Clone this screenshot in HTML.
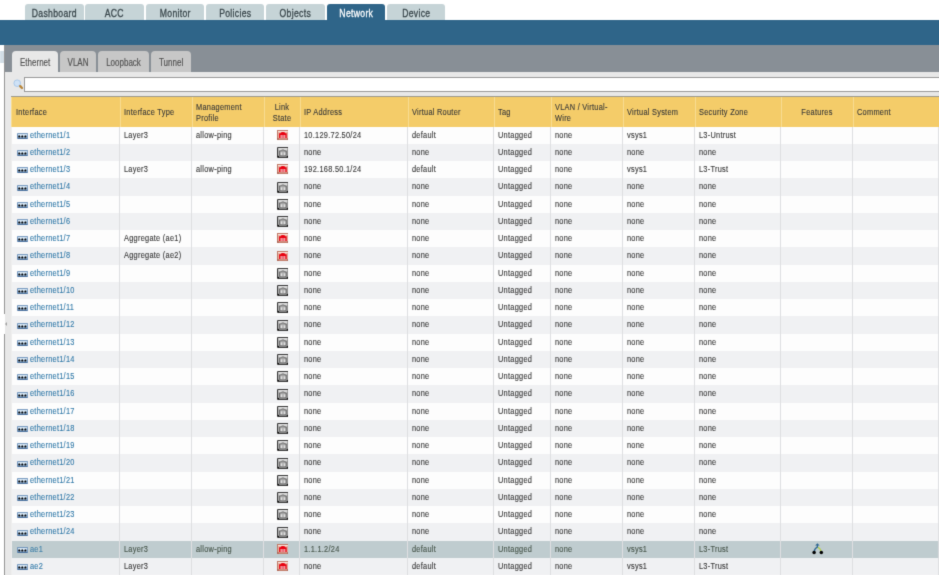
<!DOCTYPE html><html><head><meta charset='utf-8'><style>
*{margin:0;padding:0;box-sizing:border-box}
html,body{width:939px;height:575px;overflow:hidden;background:#fff;font-family:"Liberation Sans", sans-serif;position:relative}
#root{position:absolute;left:-6px;top:-6px;width:951px;height:587px;will-change:transform;background:#fff;filter:url(#soft)}
#c{position:absolute;left:6px;top:6px;width:939px;height:575px}
.a{position:absolute}
.tt{position:absolute;top:4px;height:16px;background:#c6d4d7;border-radius:3px 3px 0 0;}
.tt span{position:absolute;left:0;right:0;top:2.6px;text-align:center;font-size:10.8px;line-height:13px;letter-spacing:0.4px;color:#39464b;white-space:nowrap;transform:scaleX(0.8);-webkit-text-stroke:0.3px #39464b}
.tt.sel{background:#2f6589}
.tt.sel span{color:#fff;-webkit-text-stroke:0.3px #fff}
.st{position:absolute;top:51.2px;height:20.8px;background:#c7c7c7;border-radius:4px 4px 0 0}
.st span{position:absolute;left:0;right:0;top:5.8px;text-align:center;font-size:10px;line-height:12px;color:#505050;white-space:nowrap;transform:scaleX(0.8);-webkit-text-stroke:0.15px #505050}
.st.sel{background:#e8e8e8}
.t{position:absolute;font-size:8.3px;line-height:10.6px;color:#383838;-webkit-text-stroke:0.12px currentColor;white-space:nowrap;letter-spacing:0.3px;transform:scaleX(0.89);transform-origin:0 0}
.tc{transform-origin:50% 0}
.lk{color:#3179a8}
.sl{color:#46554a}
.sl.lk{color:#4080a8}
.vl{position:absolute;width:1px}
</style></head><body><svg width='0' height='0' style='position:absolute'><filter id='soft' x='0' y='0' width='1' height='1' color-interpolation-filters='sRGB'><feConvolveMatrix order='3' kernelMatrix='0.0144 0.0912 0.0144 0.0912 0.5776 0.0912 0.0144 0.0912 0.0144' divisor='1' edgeMode='duplicate' preserveAlpha='true'/></filter></svg><div id='root'><div id='c'>
<div class='tt' style='left:25.00px;width:58.6px'><span>Dashboard</span></div>
<div class='tt' style='left:85.30px;width:58.6px'><span>ACC</span></div>
<div class='tt' style='left:145.60px;width:58.6px'><span>Monitor</span></div>
<div class='tt' style='left:205.90px;width:58.6px'><span>Policies</span></div>
<div class='tt' style='left:266.20px;width:58.6px'><span>Objects</span></div>
<div class='tt sel' style='left:326.50px;width:58.6px'><span>Network</span></div>
<div class='tt' style='left:386.80px;width:58.6px'><span>Device</span></div>
<div class='a' style='left:-6px;top:20px;width:951px;height:24.5px;background:#2f6589'></div>
<div class='a' style='left:-6px;top:44.5px;width:10px;height:540px;background:#fff'></div>
<div class='a' style='left:0;top:50.7px;width:3.8px;height:12.5px;background:#d3dee6'></div>
<div class='a' style='left:4.6px;top:44.5px;width:941px;height:27.5px;background:#888f96'></div>
<div class='a' style='left:4.6px;top:72px;width:941px;height:509px;background:#e8e8e8'></div>
<div class='a' style='left:3.9px;top:44.5px;width:1.2px;height:269.5px;background:#959595'></div>
<div class='a' style='left:3.9px;top:334px;width:1.2px;height:247px;background:#959595'></div>
<div class='a' style='left:4.8px;top:322.4px;width:0;height:0;border-top:2px solid transparent;border-bottom:2px solid transparent;border-right:2.2px solid #a0a0a0'></div>
<div class='st sel' style='left:11.7px;width:46.3px'><span>Ethernet</span></div>
<div class='st' style='left:60.0px;width:36.0px'><span>VLAN</span></div>
<div class='st' style='left:98.0px;width:51.0px'><span>Loopback</span></div>
<div class='st' style='left:150.8px;width:40.2px'><span>Tunnel</span></div>
<svg class='a' style='left:12.5px;top:79px' width='11' height='11' viewBox='0 0 11 11'>
<circle cx='4.2' cy='4.2' r='3.3' fill='#cfe2f6' stroke='#a9c8ea' stroke-width='1'/>
<line x1='7.2' y1='7.2' x2='9.0' y2='9.0' stroke='#b8863a' stroke-width='2.4' stroke-linecap='round'/>
</svg>
<div class='a' style='left:24px;top:77px;width:920px;height:15px;background:#fff;border:1px solid #999;border-right:0'></div>
<div class='a' style='left:11px;top:96.0px;width:935px;height:30.70px;background:#f4cc69;border-top:1px solid #9c9a8e'></div>
<div class='a' style='left:11px;top:97.0px;width:1px;height:29.70px;background:#f8dc92'></div>
<div class='t' style='left:16.0px;top:106.70px'>Interface</div>
<div class='vl' style='left:120.0px;top:97.0px;height:29.70px;background:#f8dc92'></div>
<div class='t' style='left:124.0px;top:106.70px'>Interface Type</div>
<div class='vl' style='left:192.0px;top:97.0px;height:29.70px;background:#f8dc92'></div>
<div class='t' style='left:196.0px;top:102.00px'>Management<br>Profile</div>
<div class='vl' style='left:264.0px;top:97.0px;height:29.70px;background:#f8dc92'></div>
<div class='t tc' style='left:264.0px;width:36.0px;text-align:center;top:102.00px'>Link<br>State</div>
<div class='vl' style='left:300.0px;top:97.0px;height:29.70px;background:#f8dc92'></div>
<div class='t' style='left:304.0px;top:106.70px'>IP Address</div>
<div class='vl' style='left:408.0px;top:97.0px;height:29.70px;background:#f8dc92'></div>
<div class='t' style='left:412.0px;top:106.70px'>Virtual Router</div>
<div class='vl' style='left:494.0px;top:97.0px;height:29.70px;background:#f8dc92'></div>
<div class='t' style='left:498.0px;top:106.70px'>Tag</div>
<div class='vl' style='left:551.0px;top:97.0px;height:29.70px;background:#f8dc92'></div>
<div class='t' style='left:555.0px;top:102.00px'>VLAN / Virtual-<br>Wire</div>
<div class='vl' style='left:623.0px;top:97.0px;height:29.70px;background:#f8dc92'></div>
<div class='t' style='left:627.0px;top:106.70px'>Virtual System</div>
<div class='vl' style='left:695.0px;top:97.0px;height:29.70px;background:#f8dc92'></div>
<div class='t' style='left:699.0px;top:106.70px'>Security Zone</div>
<div class='vl' style='left:781.0px;top:97.0px;height:29.70px;background:#f8dc92'></div>
<div class='t tc' style='left:781.0px;width:72.0px;text-align:center;top:106.70px'>Features</div>
<div class='vl' style='left:853.0px;top:97.0px;height:29.70px;background:#f8dc92'></div>
<div class='t' style='left:857.0px;top:106.70px'>Comment</div>
<div class='a' style='left:12px;top:126.70px;width:935px;height:17.26px;background:#fdfdfd'></div>
<svg class='a' style='left:16.7px;top:132.90px' width='11.2' height='6' viewBox='0 0 11.2 6'><defs><linearGradient id='ig0' x1='0' y1='0' x2='0' y2='1'><stop offset='0' stop-color='#e2f0fa'/><stop offset='1' stop-color='#8fb4da'/></linearGradient></defs><rect x='0.4' y='0.4' width='10.4' height='5.2' rx='0.6' fill='url(#ig0)' stroke='#4f7aab' stroke-width='0.8'/><rect x='0.8' y='5.0' width='9.6' height='0.6' fill='#3a6292'/><rect x='1.3' y='2.5' width='2.0' height='2.0' rx='0.5' fill='#000'/><rect x='4.3' y='2.5' width='2.0' height='2.0' rx='0.5' fill='#000'/><rect x='7.4' y='2.5' width='2.0' height='2.0' rx='0.5' fill='#000'/><rect x='3.4' y='1.6' width='0.8' height='1.5' fill='#fff'/><rect x='6.5' y='1.6' width='0.8' height='1.5' fill='#fff'/></svg>
<div class='t lk' style='left:29.8px;top:129.60px'>ethernet1/1</div>
<div class='t' style='left:124.0px;top:129.60px'>Layer3</div>
<div class='t' style='left:196.0px;top:129.60px'>allow-ping</div>
<div class='t' style='left:304.0px;top:129.60px'>10.129.72.50/24</div>
<div class='t' style='left:412.0px;top:129.60px'>default</div>
<div class='t' style='left:498.0px;top:129.60px'>Untagged</div>
<div class='t' style='left:555.0px;top:129.60px'>none</div>
<div class='t' style='left:627.0px;top:129.60px'>vsys1</div>
<div class='t' style='left:699.0px;top:129.60px'>L3-Untrust</div>
<svg class='a' style='left:276.6px;top:129.80px' width='11.8' height='10' viewBox='0 0 11.8 10'><rect x='0.5' y='0.5' width='10.8' height='9' fill='#eab0a0' stroke='#c07a68'/><rect x='1' y='1.0' width='9.8' height='1.1' fill='#f9e4dc'/><path d='M2.1 8.2 V3.3 H3.5 Q3.9 2.1 5.9 2.1 Q7.9 2.1 8.3 3.3 H9.7 V8.2 Z' fill='#e8000f'/><rect x='3.4' y='5.0' width='5.0' height='3.2' fill='#f49aa0'/><rect x='4.9' y='5.0' width='0.55' height='3.2' fill='#e04a56'/><rect x='6.4' y='5.0' width='0.55' height='3.2' fill='#e04a56'/><rect x='1' y='8.2' width='9.8' height='1' fill='#cf8f7f'/><rect x='0.4' y='8.4' width='1.1' height='1.1' fill='#8f4a3c'/><rect x='10.3' y='8.4' width='1.1' height='1.1' fill='#8f4a3c'/></svg>
<div class='a' style='left:12px;top:143.95px;width:935px;height:17.26px;background:#f0f1f3'></div>
<svg class='a' style='left:16.7px;top:150.15px' width='11.2' height='6' viewBox='0 0 11.2 6'><defs><linearGradient id='ig1' x1='0' y1='0' x2='0' y2='1'><stop offset='0' stop-color='#e2f0fa'/><stop offset='1' stop-color='#8fb4da'/></linearGradient></defs><rect x='0.4' y='0.4' width='10.4' height='5.2' rx='0.6' fill='url(#ig1)' stroke='#4f7aab' stroke-width='0.8'/><rect x='0.8' y='5.0' width='9.6' height='0.6' fill='#3a6292'/><rect x='1.3' y='2.5' width='2.0' height='2.0' rx='0.5' fill='#000'/><rect x='4.3' y='2.5' width='2.0' height='2.0' rx='0.5' fill='#000'/><rect x='7.4' y='2.5' width='2.0' height='2.0' rx='0.5' fill='#000'/><rect x='3.4' y='1.6' width='0.8' height='1.5' fill='#fff'/><rect x='6.5' y='1.6' width='0.8' height='1.5' fill='#fff'/></svg>
<div class='t lk' style='left:29.8px;top:146.85px'>ethernet1/2</div>
<div class='t' style='left:304.0px;top:146.85px'>none</div>
<div class='t' style='left:412.0px;top:146.85px'>none</div>
<div class='t' style='left:498.0px;top:146.85px'>Untagged</div>
<div class='t' style='left:555.0px;top:146.85px'>none</div>
<div class='t' style='left:627.0px;top:146.85px'>none</div>
<div class='t' style='left:699.0px;top:146.85px'>none</div>
<svg class='a' style='left:276.6px;top:147.05px' width='11.8' height='11' viewBox='0 0 11.8 11'><rect x='0.6' y='0.6' width='10.6' height='9.8' rx='0.5' fill='#cfcfcf' stroke='#3c3c3c' stroke-width='1.2'/><rect x='1.3' y='1.3' width='9.2' height='1' fill='#f6f6f6'/><path d='M2.5 8.6 V3.9 H3.8 Q4.2 2.9 5.9 2.9 Q7.6 2.9 8 3.9 H9.3 V8.6 Z' fill='#a2a2a2' stroke='#5a5a5a' stroke-width='0.8'/><rect x='3.7' y='5.3' width='4.6' height='3' fill='#e2e2e2'/><rect x='5.2' y='5.3' width='0.5' height='3' fill='#8c8c8c'/><rect x='6.5' y='5.3' width='0.5' height='3' fill='#8c8c8c'/><rect x='1.3' y='8.9' width='9.2' height='0.9' fill='#808080'/><circle cx='1.3' cy='9.6' r='0.8' fill='#111'/><circle cx='10.5' cy='9.6' r='0.8' fill='#111'/></svg>
<div class='a' style='left:12px;top:161.20px;width:935px;height:17.26px;background:#fdfdfd'></div>
<svg class='a' style='left:16.7px;top:167.40px' width='11.2' height='6' viewBox='0 0 11.2 6'><defs><linearGradient id='ig2' x1='0' y1='0' x2='0' y2='1'><stop offset='0' stop-color='#e2f0fa'/><stop offset='1' stop-color='#8fb4da'/></linearGradient></defs><rect x='0.4' y='0.4' width='10.4' height='5.2' rx='0.6' fill='url(#ig2)' stroke='#4f7aab' stroke-width='0.8'/><rect x='0.8' y='5.0' width='9.6' height='0.6' fill='#3a6292'/><rect x='1.3' y='2.5' width='2.0' height='2.0' rx='0.5' fill='#000'/><rect x='4.3' y='2.5' width='2.0' height='2.0' rx='0.5' fill='#000'/><rect x='7.4' y='2.5' width='2.0' height='2.0' rx='0.5' fill='#000'/><rect x='3.4' y='1.6' width='0.8' height='1.5' fill='#fff'/><rect x='6.5' y='1.6' width='0.8' height='1.5' fill='#fff'/></svg>
<div class='t lk' style='left:29.8px;top:164.10px'>ethernet1/3</div>
<div class='t' style='left:124.0px;top:164.10px'>Layer3</div>
<div class='t' style='left:196.0px;top:164.10px'>allow-ping</div>
<div class='t' style='left:304.0px;top:164.10px'>192.168.50.1/24</div>
<div class='t' style='left:412.0px;top:164.10px'>default</div>
<div class='t' style='left:498.0px;top:164.10px'>Untagged</div>
<div class='t' style='left:555.0px;top:164.10px'>none</div>
<div class='t' style='left:627.0px;top:164.10px'>vsys1</div>
<div class='t' style='left:699.0px;top:164.10px'>L3-Trust</div>
<svg class='a' style='left:276.6px;top:164.30px' width='11.8' height='10' viewBox='0 0 11.8 10'><rect x='0.5' y='0.5' width='10.8' height='9' fill='#eab0a0' stroke='#c07a68'/><rect x='1' y='1.0' width='9.8' height='1.1' fill='#f9e4dc'/><path d='M2.1 8.2 V3.3 H3.5 Q3.9 2.1 5.9 2.1 Q7.9 2.1 8.3 3.3 H9.7 V8.2 Z' fill='#e8000f'/><rect x='3.4' y='5.0' width='5.0' height='3.2' fill='#f49aa0'/><rect x='4.9' y='5.0' width='0.55' height='3.2' fill='#e04a56'/><rect x='6.4' y='5.0' width='0.55' height='3.2' fill='#e04a56'/><rect x='1' y='8.2' width='9.8' height='1' fill='#cf8f7f'/><rect x='0.4' y='8.4' width='1.1' height='1.1' fill='#8f4a3c'/><rect x='10.3' y='8.4' width='1.1' height='1.1' fill='#8f4a3c'/></svg>
<div class='a' style='left:12px;top:178.45px;width:935px;height:17.26px;background:#f0f1f3'></div>
<svg class='a' style='left:16.7px;top:184.65px' width='11.2' height='6' viewBox='0 0 11.2 6'><defs><linearGradient id='ig3' x1='0' y1='0' x2='0' y2='1'><stop offset='0' stop-color='#e2f0fa'/><stop offset='1' stop-color='#8fb4da'/></linearGradient></defs><rect x='0.4' y='0.4' width='10.4' height='5.2' rx='0.6' fill='url(#ig3)' stroke='#4f7aab' stroke-width='0.8'/><rect x='0.8' y='5.0' width='9.6' height='0.6' fill='#3a6292'/><rect x='1.3' y='2.5' width='2.0' height='2.0' rx='0.5' fill='#000'/><rect x='4.3' y='2.5' width='2.0' height='2.0' rx='0.5' fill='#000'/><rect x='7.4' y='2.5' width='2.0' height='2.0' rx='0.5' fill='#000'/><rect x='3.4' y='1.6' width='0.8' height='1.5' fill='#fff'/><rect x='6.5' y='1.6' width='0.8' height='1.5' fill='#fff'/></svg>
<div class='t lk' style='left:29.8px;top:181.35px'>ethernet1/4</div>
<div class='t' style='left:304.0px;top:181.35px'>none</div>
<div class='t' style='left:412.0px;top:181.35px'>none</div>
<div class='t' style='left:498.0px;top:181.35px'>Untagged</div>
<div class='t' style='left:555.0px;top:181.35px'>none</div>
<div class='t' style='left:627.0px;top:181.35px'>none</div>
<div class='t' style='left:699.0px;top:181.35px'>none</div>
<svg class='a' style='left:276.6px;top:181.55px' width='11.8' height='11' viewBox='0 0 11.8 11'><rect x='0.6' y='0.6' width='10.6' height='9.8' rx='0.5' fill='#cfcfcf' stroke='#3c3c3c' stroke-width='1.2'/><rect x='1.3' y='1.3' width='9.2' height='1' fill='#f6f6f6'/><path d='M2.5 8.6 V3.9 H3.8 Q4.2 2.9 5.9 2.9 Q7.6 2.9 8 3.9 H9.3 V8.6 Z' fill='#a2a2a2' stroke='#5a5a5a' stroke-width='0.8'/><rect x='3.7' y='5.3' width='4.6' height='3' fill='#e2e2e2'/><rect x='5.2' y='5.3' width='0.5' height='3' fill='#8c8c8c'/><rect x='6.5' y='5.3' width='0.5' height='3' fill='#8c8c8c'/><rect x='1.3' y='8.9' width='9.2' height='0.9' fill='#808080'/><circle cx='1.3' cy='9.6' r='0.8' fill='#111'/><circle cx='10.5' cy='9.6' r='0.8' fill='#111'/></svg>
<div class='a' style='left:12px;top:195.70px;width:935px;height:17.26px;background:#fdfdfd'></div>
<svg class='a' style='left:16.7px;top:201.90px' width='11.2' height='6' viewBox='0 0 11.2 6'><defs><linearGradient id='ig4' x1='0' y1='0' x2='0' y2='1'><stop offset='0' stop-color='#e2f0fa'/><stop offset='1' stop-color='#8fb4da'/></linearGradient></defs><rect x='0.4' y='0.4' width='10.4' height='5.2' rx='0.6' fill='url(#ig4)' stroke='#4f7aab' stroke-width='0.8'/><rect x='0.8' y='5.0' width='9.6' height='0.6' fill='#3a6292'/><rect x='1.3' y='2.5' width='2.0' height='2.0' rx='0.5' fill='#000'/><rect x='4.3' y='2.5' width='2.0' height='2.0' rx='0.5' fill='#000'/><rect x='7.4' y='2.5' width='2.0' height='2.0' rx='0.5' fill='#000'/><rect x='3.4' y='1.6' width='0.8' height='1.5' fill='#fff'/><rect x='6.5' y='1.6' width='0.8' height='1.5' fill='#fff'/></svg>
<div class='t lk' style='left:29.8px;top:198.60px'>ethernet1/5</div>
<div class='t' style='left:304.0px;top:198.60px'>none</div>
<div class='t' style='left:412.0px;top:198.60px'>none</div>
<div class='t' style='left:498.0px;top:198.60px'>Untagged</div>
<div class='t' style='left:555.0px;top:198.60px'>none</div>
<div class='t' style='left:627.0px;top:198.60px'>none</div>
<div class='t' style='left:699.0px;top:198.60px'>none</div>
<svg class='a' style='left:276.6px;top:198.80px' width='11.8' height='11' viewBox='0 0 11.8 11'><rect x='0.6' y='0.6' width='10.6' height='9.8' rx='0.5' fill='#cfcfcf' stroke='#3c3c3c' stroke-width='1.2'/><rect x='1.3' y='1.3' width='9.2' height='1' fill='#f6f6f6'/><path d='M2.5 8.6 V3.9 H3.8 Q4.2 2.9 5.9 2.9 Q7.6 2.9 8 3.9 H9.3 V8.6 Z' fill='#a2a2a2' stroke='#5a5a5a' stroke-width='0.8'/><rect x='3.7' y='5.3' width='4.6' height='3' fill='#e2e2e2'/><rect x='5.2' y='5.3' width='0.5' height='3' fill='#8c8c8c'/><rect x='6.5' y='5.3' width='0.5' height='3' fill='#8c8c8c'/><rect x='1.3' y='8.9' width='9.2' height='0.9' fill='#808080'/><circle cx='1.3' cy='9.6' r='0.8' fill='#111'/><circle cx='10.5' cy='9.6' r='0.8' fill='#111'/></svg>
<div class='a' style='left:12px;top:212.95px;width:935px;height:17.26px;background:#f0f1f3'></div>
<svg class='a' style='left:16.7px;top:219.15px' width='11.2' height='6' viewBox='0 0 11.2 6'><defs><linearGradient id='ig5' x1='0' y1='0' x2='0' y2='1'><stop offset='0' stop-color='#e2f0fa'/><stop offset='1' stop-color='#8fb4da'/></linearGradient></defs><rect x='0.4' y='0.4' width='10.4' height='5.2' rx='0.6' fill='url(#ig5)' stroke='#4f7aab' stroke-width='0.8'/><rect x='0.8' y='5.0' width='9.6' height='0.6' fill='#3a6292'/><rect x='1.3' y='2.5' width='2.0' height='2.0' rx='0.5' fill='#000'/><rect x='4.3' y='2.5' width='2.0' height='2.0' rx='0.5' fill='#000'/><rect x='7.4' y='2.5' width='2.0' height='2.0' rx='0.5' fill='#000'/><rect x='3.4' y='1.6' width='0.8' height='1.5' fill='#fff'/><rect x='6.5' y='1.6' width='0.8' height='1.5' fill='#fff'/></svg>
<div class='t lk' style='left:29.8px;top:215.85px'>ethernet1/6</div>
<div class='t' style='left:304.0px;top:215.85px'>none</div>
<div class='t' style='left:412.0px;top:215.85px'>none</div>
<div class='t' style='left:498.0px;top:215.85px'>Untagged</div>
<div class='t' style='left:555.0px;top:215.85px'>none</div>
<div class='t' style='left:627.0px;top:215.85px'>none</div>
<div class='t' style='left:699.0px;top:215.85px'>none</div>
<svg class='a' style='left:276.6px;top:216.05px' width='11.8' height='11' viewBox='0 0 11.8 11'><rect x='0.6' y='0.6' width='10.6' height='9.8' rx='0.5' fill='#cfcfcf' stroke='#3c3c3c' stroke-width='1.2'/><rect x='1.3' y='1.3' width='9.2' height='1' fill='#f6f6f6'/><path d='M2.5 8.6 V3.9 H3.8 Q4.2 2.9 5.9 2.9 Q7.6 2.9 8 3.9 H9.3 V8.6 Z' fill='#a2a2a2' stroke='#5a5a5a' stroke-width='0.8'/><rect x='3.7' y='5.3' width='4.6' height='3' fill='#e2e2e2'/><rect x='5.2' y='5.3' width='0.5' height='3' fill='#8c8c8c'/><rect x='6.5' y='5.3' width='0.5' height='3' fill='#8c8c8c'/><rect x='1.3' y='8.9' width='9.2' height='0.9' fill='#808080'/><circle cx='1.3' cy='9.6' r='0.8' fill='#111'/><circle cx='10.5' cy='9.6' r='0.8' fill='#111'/></svg>
<div class='a' style='left:12px;top:230.20px;width:935px;height:17.26px;background:#fdfdfd'></div>
<svg class='a' style='left:16.7px;top:236.40px' width='11.2' height='6' viewBox='0 0 11.2 6'><defs><linearGradient id='ig6' x1='0' y1='0' x2='0' y2='1'><stop offset='0' stop-color='#e2f0fa'/><stop offset='1' stop-color='#8fb4da'/></linearGradient></defs><rect x='0.4' y='0.4' width='10.4' height='5.2' rx='0.6' fill='url(#ig6)' stroke='#4f7aab' stroke-width='0.8'/><rect x='0.8' y='5.0' width='9.6' height='0.6' fill='#3a6292'/><rect x='1.3' y='2.5' width='2.0' height='2.0' rx='0.5' fill='#000'/><rect x='4.3' y='2.5' width='2.0' height='2.0' rx='0.5' fill='#000'/><rect x='7.4' y='2.5' width='2.0' height='2.0' rx='0.5' fill='#000'/><rect x='3.4' y='1.6' width='0.8' height='1.5' fill='#fff'/><rect x='6.5' y='1.6' width='0.8' height='1.5' fill='#fff'/></svg>
<div class='t lk' style='left:29.8px;top:233.10px'>ethernet1/7</div>
<div class='t' style='left:124.0px;top:233.10px'>Aggregate (ae1)</div>
<div class='t' style='left:304.0px;top:233.10px'>none</div>
<div class='t' style='left:412.0px;top:233.10px'>none</div>
<div class='t' style='left:498.0px;top:233.10px'>Untagged</div>
<div class='t' style='left:555.0px;top:233.10px'>none</div>
<div class='t' style='left:627.0px;top:233.10px'>none</div>
<div class='t' style='left:699.0px;top:233.10px'>none</div>
<svg class='a' style='left:276.6px;top:233.30px' width='11.8' height='10' viewBox='0 0 11.8 10'><rect x='0.5' y='0.5' width='10.8' height='9' fill='#eab0a0' stroke='#c07a68'/><rect x='1' y='1.0' width='9.8' height='1.1' fill='#f9e4dc'/><path d='M2.1 8.2 V3.3 H3.5 Q3.9 2.1 5.9 2.1 Q7.9 2.1 8.3 3.3 H9.7 V8.2 Z' fill='#e8000f'/><rect x='3.4' y='5.0' width='5.0' height='3.2' fill='#f49aa0'/><rect x='4.9' y='5.0' width='0.55' height='3.2' fill='#e04a56'/><rect x='6.4' y='5.0' width='0.55' height='3.2' fill='#e04a56'/><rect x='1' y='8.2' width='9.8' height='1' fill='#cf8f7f'/><rect x='0.4' y='8.4' width='1.1' height='1.1' fill='#8f4a3c'/><rect x='10.3' y='8.4' width='1.1' height='1.1' fill='#8f4a3c'/></svg>
<div class='a' style='left:12px;top:247.45px;width:935px;height:17.26px;background:#f0f1f3'></div>
<svg class='a' style='left:16.7px;top:253.65px' width='11.2' height='6' viewBox='0 0 11.2 6'><defs><linearGradient id='ig7' x1='0' y1='0' x2='0' y2='1'><stop offset='0' stop-color='#e2f0fa'/><stop offset='1' stop-color='#8fb4da'/></linearGradient></defs><rect x='0.4' y='0.4' width='10.4' height='5.2' rx='0.6' fill='url(#ig7)' stroke='#4f7aab' stroke-width='0.8'/><rect x='0.8' y='5.0' width='9.6' height='0.6' fill='#3a6292'/><rect x='1.3' y='2.5' width='2.0' height='2.0' rx='0.5' fill='#000'/><rect x='4.3' y='2.5' width='2.0' height='2.0' rx='0.5' fill='#000'/><rect x='7.4' y='2.5' width='2.0' height='2.0' rx='0.5' fill='#000'/><rect x='3.4' y='1.6' width='0.8' height='1.5' fill='#fff'/><rect x='6.5' y='1.6' width='0.8' height='1.5' fill='#fff'/></svg>
<div class='t lk' style='left:29.8px;top:250.35px'>ethernet1/8</div>
<div class='t' style='left:124.0px;top:250.35px'>Aggregate (ae2)</div>
<div class='t' style='left:304.0px;top:250.35px'>none</div>
<div class='t' style='left:412.0px;top:250.35px'>none</div>
<div class='t' style='left:498.0px;top:250.35px'>Untagged</div>
<div class='t' style='left:555.0px;top:250.35px'>none</div>
<div class='t' style='left:627.0px;top:250.35px'>none</div>
<div class='t' style='left:699.0px;top:250.35px'>none</div>
<svg class='a' style='left:276.6px;top:250.55px' width='11.8' height='10' viewBox='0 0 11.8 10'><rect x='0.5' y='0.5' width='10.8' height='9' fill='#eab0a0' stroke='#c07a68'/><rect x='1' y='1.0' width='9.8' height='1.1' fill='#f9e4dc'/><path d='M2.1 8.2 V3.3 H3.5 Q3.9 2.1 5.9 2.1 Q7.9 2.1 8.3 3.3 H9.7 V8.2 Z' fill='#e8000f'/><rect x='3.4' y='5.0' width='5.0' height='3.2' fill='#f49aa0'/><rect x='4.9' y='5.0' width='0.55' height='3.2' fill='#e04a56'/><rect x='6.4' y='5.0' width='0.55' height='3.2' fill='#e04a56'/><rect x='1' y='8.2' width='9.8' height='1' fill='#cf8f7f'/><rect x='0.4' y='8.4' width='1.1' height='1.1' fill='#8f4a3c'/><rect x='10.3' y='8.4' width='1.1' height='1.1' fill='#8f4a3c'/></svg>
<div class='a' style='left:12px;top:264.70px;width:935px;height:17.26px;background:#fdfdfd'></div>
<svg class='a' style='left:16.7px;top:270.90px' width='11.2' height='6' viewBox='0 0 11.2 6'><defs><linearGradient id='ig8' x1='0' y1='0' x2='0' y2='1'><stop offset='0' stop-color='#e2f0fa'/><stop offset='1' stop-color='#8fb4da'/></linearGradient></defs><rect x='0.4' y='0.4' width='10.4' height='5.2' rx='0.6' fill='url(#ig8)' stroke='#4f7aab' stroke-width='0.8'/><rect x='0.8' y='5.0' width='9.6' height='0.6' fill='#3a6292'/><rect x='1.3' y='2.5' width='2.0' height='2.0' rx='0.5' fill='#000'/><rect x='4.3' y='2.5' width='2.0' height='2.0' rx='0.5' fill='#000'/><rect x='7.4' y='2.5' width='2.0' height='2.0' rx='0.5' fill='#000'/><rect x='3.4' y='1.6' width='0.8' height='1.5' fill='#fff'/><rect x='6.5' y='1.6' width='0.8' height='1.5' fill='#fff'/></svg>
<div class='t lk' style='left:29.8px;top:267.60px'>ethernet1/9</div>
<div class='t' style='left:304.0px;top:267.60px'>none</div>
<div class='t' style='left:412.0px;top:267.60px'>none</div>
<div class='t' style='left:498.0px;top:267.60px'>Untagged</div>
<div class='t' style='left:555.0px;top:267.60px'>none</div>
<div class='t' style='left:627.0px;top:267.60px'>none</div>
<div class='t' style='left:699.0px;top:267.60px'>none</div>
<svg class='a' style='left:276.6px;top:267.80px' width='11.8' height='11' viewBox='0 0 11.8 11'><rect x='0.6' y='0.6' width='10.6' height='9.8' rx='0.5' fill='#cfcfcf' stroke='#3c3c3c' stroke-width='1.2'/><rect x='1.3' y='1.3' width='9.2' height='1' fill='#f6f6f6'/><path d='M2.5 8.6 V3.9 H3.8 Q4.2 2.9 5.9 2.9 Q7.6 2.9 8 3.9 H9.3 V8.6 Z' fill='#a2a2a2' stroke='#5a5a5a' stroke-width='0.8'/><rect x='3.7' y='5.3' width='4.6' height='3' fill='#e2e2e2'/><rect x='5.2' y='5.3' width='0.5' height='3' fill='#8c8c8c'/><rect x='6.5' y='5.3' width='0.5' height='3' fill='#8c8c8c'/><rect x='1.3' y='8.9' width='9.2' height='0.9' fill='#808080'/><circle cx='1.3' cy='9.6' r='0.8' fill='#111'/><circle cx='10.5' cy='9.6' r='0.8' fill='#111'/></svg>
<div class='a' style='left:12px;top:281.95px;width:935px;height:17.26px;background:#f0f1f3'></div>
<svg class='a' style='left:16.7px;top:288.15px' width='11.2' height='6' viewBox='0 0 11.2 6'><defs><linearGradient id='ig9' x1='0' y1='0' x2='0' y2='1'><stop offset='0' stop-color='#e2f0fa'/><stop offset='1' stop-color='#8fb4da'/></linearGradient></defs><rect x='0.4' y='0.4' width='10.4' height='5.2' rx='0.6' fill='url(#ig9)' stroke='#4f7aab' stroke-width='0.8'/><rect x='0.8' y='5.0' width='9.6' height='0.6' fill='#3a6292'/><rect x='1.3' y='2.5' width='2.0' height='2.0' rx='0.5' fill='#000'/><rect x='4.3' y='2.5' width='2.0' height='2.0' rx='0.5' fill='#000'/><rect x='7.4' y='2.5' width='2.0' height='2.0' rx='0.5' fill='#000'/><rect x='3.4' y='1.6' width='0.8' height='1.5' fill='#fff'/><rect x='6.5' y='1.6' width='0.8' height='1.5' fill='#fff'/></svg>
<div class='t lk' style='left:29.8px;top:284.85px'>ethernet1/10</div>
<div class='t' style='left:304.0px;top:284.85px'>none</div>
<div class='t' style='left:412.0px;top:284.85px'>none</div>
<div class='t' style='left:498.0px;top:284.85px'>Untagged</div>
<div class='t' style='left:555.0px;top:284.85px'>none</div>
<div class='t' style='left:627.0px;top:284.85px'>none</div>
<div class='t' style='left:699.0px;top:284.85px'>none</div>
<svg class='a' style='left:276.6px;top:285.05px' width='11.8' height='11' viewBox='0 0 11.8 11'><rect x='0.6' y='0.6' width='10.6' height='9.8' rx='0.5' fill='#cfcfcf' stroke='#3c3c3c' stroke-width='1.2'/><rect x='1.3' y='1.3' width='9.2' height='1' fill='#f6f6f6'/><path d='M2.5 8.6 V3.9 H3.8 Q4.2 2.9 5.9 2.9 Q7.6 2.9 8 3.9 H9.3 V8.6 Z' fill='#a2a2a2' stroke='#5a5a5a' stroke-width='0.8'/><rect x='3.7' y='5.3' width='4.6' height='3' fill='#e2e2e2'/><rect x='5.2' y='5.3' width='0.5' height='3' fill='#8c8c8c'/><rect x='6.5' y='5.3' width='0.5' height='3' fill='#8c8c8c'/><rect x='1.3' y='8.9' width='9.2' height='0.9' fill='#808080'/><circle cx='1.3' cy='9.6' r='0.8' fill='#111'/><circle cx='10.5' cy='9.6' r='0.8' fill='#111'/></svg>
<div class='a' style='left:12px;top:299.20px;width:935px;height:17.26px;background:#fdfdfd'></div>
<svg class='a' style='left:16.7px;top:305.40px' width='11.2' height='6' viewBox='0 0 11.2 6'><defs><linearGradient id='ig10' x1='0' y1='0' x2='0' y2='1'><stop offset='0' stop-color='#e2f0fa'/><stop offset='1' stop-color='#8fb4da'/></linearGradient></defs><rect x='0.4' y='0.4' width='10.4' height='5.2' rx='0.6' fill='url(#ig10)' stroke='#4f7aab' stroke-width='0.8'/><rect x='0.8' y='5.0' width='9.6' height='0.6' fill='#3a6292'/><rect x='1.3' y='2.5' width='2.0' height='2.0' rx='0.5' fill='#000'/><rect x='4.3' y='2.5' width='2.0' height='2.0' rx='0.5' fill='#000'/><rect x='7.4' y='2.5' width='2.0' height='2.0' rx='0.5' fill='#000'/><rect x='3.4' y='1.6' width='0.8' height='1.5' fill='#fff'/><rect x='6.5' y='1.6' width='0.8' height='1.5' fill='#fff'/></svg>
<div class='t lk' style='left:29.8px;top:302.10px'>ethernet1/11</div>
<div class='t' style='left:304.0px;top:302.10px'>none</div>
<div class='t' style='left:412.0px;top:302.10px'>none</div>
<div class='t' style='left:498.0px;top:302.10px'>Untagged</div>
<div class='t' style='left:555.0px;top:302.10px'>none</div>
<div class='t' style='left:627.0px;top:302.10px'>none</div>
<div class='t' style='left:699.0px;top:302.10px'>none</div>
<svg class='a' style='left:276.6px;top:302.30px' width='11.8' height='11' viewBox='0 0 11.8 11'><rect x='0.6' y='0.6' width='10.6' height='9.8' rx='0.5' fill='#cfcfcf' stroke='#3c3c3c' stroke-width='1.2'/><rect x='1.3' y='1.3' width='9.2' height='1' fill='#f6f6f6'/><path d='M2.5 8.6 V3.9 H3.8 Q4.2 2.9 5.9 2.9 Q7.6 2.9 8 3.9 H9.3 V8.6 Z' fill='#a2a2a2' stroke='#5a5a5a' stroke-width='0.8'/><rect x='3.7' y='5.3' width='4.6' height='3' fill='#e2e2e2'/><rect x='5.2' y='5.3' width='0.5' height='3' fill='#8c8c8c'/><rect x='6.5' y='5.3' width='0.5' height='3' fill='#8c8c8c'/><rect x='1.3' y='8.9' width='9.2' height='0.9' fill='#808080'/><circle cx='1.3' cy='9.6' r='0.8' fill='#111'/><circle cx='10.5' cy='9.6' r='0.8' fill='#111'/></svg>
<div class='a' style='left:12px;top:316.45px;width:935px;height:17.26px;background:#f0f1f3'></div>
<svg class='a' style='left:16.7px;top:322.65px' width='11.2' height='6' viewBox='0 0 11.2 6'><defs><linearGradient id='ig11' x1='0' y1='0' x2='0' y2='1'><stop offset='0' stop-color='#e2f0fa'/><stop offset='1' stop-color='#8fb4da'/></linearGradient></defs><rect x='0.4' y='0.4' width='10.4' height='5.2' rx='0.6' fill='url(#ig11)' stroke='#4f7aab' stroke-width='0.8'/><rect x='0.8' y='5.0' width='9.6' height='0.6' fill='#3a6292'/><rect x='1.3' y='2.5' width='2.0' height='2.0' rx='0.5' fill='#000'/><rect x='4.3' y='2.5' width='2.0' height='2.0' rx='0.5' fill='#000'/><rect x='7.4' y='2.5' width='2.0' height='2.0' rx='0.5' fill='#000'/><rect x='3.4' y='1.6' width='0.8' height='1.5' fill='#fff'/><rect x='6.5' y='1.6' width='0.8' height='1.5' fill='#fff'/></svg>
<div class='t lk' style='left:29.8px;top:319.35px'>ethernet1/12</div>
<div class='t' style='left:304.0px;top:319.35px'>none</div>
<div class='t' style='left:412.0px;top:319.35px'>none</div>
<div class='t' style='left:498.0px;top:319.35px'>Untagged</div>
<div class='t' style='left:555.0px;top:319.35px'>none</div>
<div class='t' style='left:627.0px;top:319.35px'>none</div>
<div class='t' style='left:699.0px;top:319.35px'>none</div>
<svg class='a' style='left:276.6px;top:319.55px' width='11.8' height='11' viewBox='0 0 11.8 11'><rect x='0.6' y='0.6' width='10.6' height='9.8' rx='0.5' fill='#cfcfcf' stroke='#3c3c3c' stroke-width='1.2'/><rect x='1.3' y='1.3' width='9.2' height='1' fill='#f6f6f6'/><path d='M2.5 8.6 V3.9 H3.8 Q4.2 2.9 5.9 2.9 Q7.6 2.9 8 3.9 H9.3 V8.6 Z' fill='#a2a2a2' stroke='#5a5a5a' stroke-width='0.8'/><rect x='3.7' y='5.3' width='4.6' height='3' fill='#e2e2e2'/><rect x='5.2' y='5.3' width='0.5' height='3' fill='#8c8c8c'/><rect x='6.5' y='5.3' width='0.5' height='3' fill='#8c8c8c'/><rect x='1.3' y='8.9' width='9.2' height='0.9' fill='#808080'/><circle cx='1.3' cy='9.6' r='0.8' fill='#111'/><circle cx='10.5' cy='9.6' r='0.8' fill='#111'/></svg>
<div class='a' style='left:12px;top:333.70px;width:935px;height:17.26px;background:#fdfdfd'></div>
<svg class='a' style='left:16.7px;top:339.90px' width='11.2' height='6' viewBox='0 0 11.2 6'><defs><linearGradient id='ig12' x1='0' y1='0' x2='0' y2='1'><stop offset='0' stop-color='#e2f0fa'/><stop offset='1' stop-color='#8fb4da'/></linearGradient></defs><rect x='0.4' y='0.4' width='10.4' height='5.2' rx='0.6' fill='url(#ig12)' stroke='#4f7aab' stroke-width='0.8'/><rect x='0.8' y='5.0' width='9.6' height='0.6' fill='#3a6292'/><rect x='1.3' y='2.5' width='2.0' height='2.0' rx='0.5' fill='#000'/><rect x='4.3' y='2.5' width='2.0' height='2.0' rx='0.5' fill='#000'/><rect x='7.4' y='2.5' width='2.0' height='2.0' rx='0.5' fill='#000'/><rect x='3.4' y='1.6' width='0.8' height='1.5' fill='#fff'/><rect x='6.5' y='1.6' width='0.8' height='1.5' fill='#fff'/></svg>
<div class='t lk' style='left:29.8px;top:336.60px'>ethernet1/13</div>
<div class='t' style='left:304.0px;top:336.60px'>none</div>
<div class='t' style='left:412.0px;top:336.60px'>none</div>
<div class='t' style='left:498.0px;top:336.60px'>Untagged</div>
<div class='t' style='left:555.0px;top:336.60px'>none</div>
<div class='t' style='left:627.0px;top:336.60px'>none</div>
<div class='t' style='left:699.0px;top:336.60px'>none</div>
<svg class='a' style='left:276.6px;top:336.80px' width='11.8' height='11' viewBox='0 0 11.8 11'><rect x='0.6' y='0.6' width='10.6' height='9.8' rx='0.5' fill='#cfcfcf' stroke='#3c3c3c' stroke-width='1.2'/><rect x='1.3' y='1.3' width='9.2' height='1' fill='#f6f6f6'/><path d='M2.5 8.6 V3.9 H3.8 Q4.2 2.9 5.9 2.9 Q7.6 2.9 8 3.9 H9.3 V8.6 Z' fill='#a2a2a2' stroke='#5a5a5a' stroke-width='0.8'/><rect x='3.7' y='5.3' width='4.6' height='3' fill='#e2e2e2'/><rect x='5.2' y='5.3' width='0.5' height='3' fill='#8c8c8c'/><rect x='6.5' y='5.3' width='0.5' height='3' fill='#8c8c8c'/><rect x='1.3' y='8.9' width='9.2' height='0.9' fill='#808080'/><circle cx='1.3' cy='9.6' r='0.8' fill='#111'/><circle cx='10.5' cy='9.6' r='0.8' fill='#111'/></svg>
<div class='a' style='left:12px;top:350.95px;width:935px;height:17.26px;background:#f0f1f3'></div>
<svg class='a' style='left:16.7px;top:357.15px' width='11.2' height='6' viewBox='0 0 11.2 6'><defs><linearGradient id='ig13' x1='0' y1='0' x2='0' y2='1'><stop offset='0' stop-color='#e2f0fa'/><stop offset='1' stop-color='#8fb4da'/></linearGradient></defs><rect x='0.4' y='0.4' width='10.4' height='5.2' rx='0.6' fill='url(#ig13)' stroke='#4f7aab' stroke-width='0.8'/><rect x='0.8' y='5.0' width='9.6' height='0.6' fill='#3a6292'/><rect x='1.3' y='2.5' width='2.0' height='2.0' rx='0.5' fill='#000'/><rect x='4.3' y='2.5' width='2.0' height='2.0' rx='0.5' fill='#000'/><rect x='7.4' y='2.5' width='2.0' height='2.0' rx='0.5' fill='#000'/><rect x='3.4' y='1.6' width='0.8' height='1.5' fill='#fff'/><rect x='6.5' y='1.6' width='0.8' height='1.5' fill='#fff'/></svg>
<div class='t lk' style='left:29.8px;top:353.85px'>ethernet1/14</div>
<div class='t' style='left:304.0px;top:353.85px'>none</div>
<div class='t' style='left:412.0px;top:353.85px'>none</div>
<div class='t' style='left:498.0px;top:353.85px'>Untagged</div>
<div class='t' style='left:555.0px;top:353.85px'>none</div>
<div class='t' style='left:627.0px;top:353.85px'>none</div>
<div class='t' style='left:699.0px;top:353.85px'>none</div>
<svg class='a' style='left:276.6px;top:354.05px' width='11.8' height='11' viewBox='0 0 11.8 11'><rect x='0.6' y='0.6' width='10.6' height='9.8' rx='0.5' fill='#cfcfcf' stroke='#3c3c3c' stroke-width='1.2'/><rect x='1.3' y='1.3' width='9.2' height='1' fill='#f6f6f6'/><path d='M2.5 8.6 V3.9 H3.8 Q4.2 2.9 5.9 2.9 Q7.6 2.9 8 3.9 H9.3 V8.6 Z' fill='#a2a2a2' stroke='#5a5a5a' stroke-width='0.8'/><rect x='3.7' y='5.3' width='4.6' height='3' fill='#e2e2e2'/><rect x='5.2' y='5.3' width='0.5' height='3' fill='#8c8c8c'/><rect x='6.5' y='5.3' width='0.5' height='3' fill='#8c8c8c'/><rect x='1.3' y='8.9' width='9.2' height='0.9' fill='#808080'/><circle cx='1.3' cy='9.6' r='0.8' fill='#111'/><circle cx='10.5' cy='9.6' r='0.8' fill='#111'/></svg>
<div class='a' style='left:12px;top:368.20px;width:935px;height:17.26px;background:#fdfdfd'></div>
<svg class='a' style='left:16.7px;top:374.40px' width='11.2' height='6' viewBox='0 0 11.2 6'><defs><linearGradient id='ig14' x1='0' y1='0' x2='0' y2='1'><stop offset='0' stop-color='#e2f0fa'/><stop offset='1' stop-color='#8fb4da'/></linearGradient></defs><rect x='0.4' y='0.4' width='10.4' height='5.2' rx='0.6' fill='url(#ig14)' stroke='#4f7aab' stroke-width='0.8'/><rect x='0.8' y='5.0' width='9.6' height='0.6' fill='#3a6292'/><rect x='1.3' y='2.5' width='2.0' height='2.0' rx='0.5' fill='#000'/><rect x='4.3' y='2.5' width='2.0' height='2.0' rx='0.5' fill='#000'/><rect x='7.4' y='2.5' width='2.0' height='2.0' rx='0.5' fill='#000'/><rect x='3.4' y='1.6' width='0.8' height='1.5' fill='#fff'/><rect x='6.5' y='1.6' width='0.8' height='1.5' fill='#fff'/></svg>
<div class='t lk' style='left:29.8px;top:371.10px'>ethernet1/15</div>
<div class='t' style='left:304.0px;top:371.10px'>none</div>
<div class='t' style='left:412.0px;top:371.10px'>none</div>
<div class='t' style='left:498.0px;top:371.10px'>Untagged</div>
<div class='t' style='left:555.0px;top:371.10px'>none</div>
<div class='t' style='left:627.0px;top:371.10px'>none</div>
<div class='t' style='left:699.0px;top:371.10px'>none</div>
<svg class='a' style='left:276.6px;top:371.30px' width='11.8' height='11' viewBox='0 0 11.8 11'><rect x='0.6' y='0.6' width='10.6' height='9.8' rx='0.5' fill='#cfcfcf' stroke='#3c3c3c' stroke-width='1.2'/><rect x='1.3' y='1.3' width='9.2' height='1' fill='#f6f6f6'/><path d='M2.5 8.6 V3.9 H3.8 Q4.2 2.9 5.9 2.9 Q7.6 2.9 8 3.9 H9.3 V8.6 Z' fill='#a2a2a2' stroke='#5a5a5a' stroke-width='0.8'/><rect x='3.7' y='5.3' width='4.6' height='3' fill='#e2e2e2'/><rect x='5.2' y='5.3' width='0.5' height='3' fill='#8c8c8c'/><rect x='6.5' y='5.3' width='0.5' height='3' fill='#8c8c8c'/><rect x='1.3' y='8.9' width='9.2' height='0.9' fill='#808080'/><circle cx='1.3' cy='9.6' r='0.8' fill='#111'/><circle cx='10.5' cy='9.6' r='0.8' fill='#111'/></svg>
<div class='a' style='left:12px;top:385.45px;width:935px;height:17.26px;background:#f0f1f3'></div>
<svg class='a' style='left:16.7px;top:391.65px' width='11.2' height='6' viewBox='0 0 11.2 6'><defs><linearGradient id='ig15' x1='0' y1='0' x2='0' y2='1'><stop offset='0' stop-color='#e2f0fa'/><stop offset='1' stop-color='#8fb4da'/></linearGradient></defs><rect x='0.4' y='0.4' width='10.4' height='5.2' rx='0.6' fill='url(#ig15)' stroke='#4f7aab' stroke-width='0.8'/><rect x='0.8' y='5.0' width='9.6' height='0.6' fill='#3a6292'/><rect x='1.3' y='2.5' width='2.0' height='2.0' rx='0.5' fill='#000'/><rect x='4.3' y='2.5' width='2.0' height='2.0' rx='0.5' fill='#000'/><rect x='7.4' y='2.5' width='2.0' height='2.0' rx='0.5' fill='#000'/><rect x='3.4' y='1.6' width='0.8' height='1.5' fill='#fff'/><rect x='6.5' y='1.6' width='0.8' height='1.5' fill='#fff'/></svg>
<div class='t lk' style='left:29.8px;top:388.35px'>ethernet1/16</div>
<div class='t' style='left:304.0px;top:388.35px'>none</div>
<div class='t' style='left:412.0px;top:388.35px'>none</div>
<div class='t' style='left:498.0px;top:388.35px'>Untagged</div>
<div class='t' style='left:555.0px;top:388.35px'>none</div>
<div class='t' style='left:627.0px;top:388.35px'>none</div>
<div class='t' style='left:699.0px;top:388.35px'>none</div>
<svg class='a' style='left:276.6px;top:388.55px' width='11.8' height='11' viewBox='0 0 11.8 11'><rect x='0.6' y='0.6' width='10.6' height='9.8' rx='0.5' fill='#cfcfcf' stroke='#3c3c3c' stroke-width='1.2'/><rect x='1.3' y='1.3' width='9.2' height='1' fill='#f6f6f6'/><path d='M2.5 8.6 V3.9 H3.8 Q4.2 2.9 5.9 2.9 Q7.6 2.9 8 3.9 H9.3 V8.6 Z' fill='#a2a2a2' stroke='#5a5a5a' stroke-width='0.8'/><rect x='3.7' y='5.3' width='4.6' height='3' fill='#e2e2e2'/><rect x='5.2' y='5.3' width='0.5' height='3' fill='#8c8c8c'/><rect x='6.5' y='5.3' width='0.5' height='3' fill='#8c8c8c'/><rect x='1.3' y='8.9' width='9.2' height='0.9' fill='#808080'/><circle cx='1.3' cy='9.6' r='0.8' fill='#111'/><circle cx='10.5' cy='9.6' r='0.8' fill='#111'/></svg>
<div class='a' style='left:12px;top:402.70px;width:935px;height:17.26px;background:#fdfdfd'></div>
<svg class='a' style='left:16.7px;top:408.90px' width='11.2' height='6' viewBox='0 0 11.2 6'><defs><linearGradient id='ig16' x1='0' y1='0' x2='0' y2='1'><stop offset='0' stop-color='#e2f0fa'/><stop offset='1' stop-color='#8fb4da'/></linearGradient></defs><rect x='0.4' y='0.4' width='10.4' height='5.2' rx='0.6' fill='url(#ig16)' stroke='#4f7aab' stroke-width='0.8'/><rect x='0.8' y='5.0' width='9.6' height='0.6' fill='#3a6292'/><rect x='1.3' y='2.5' width='2.0' height='2.0' rx='0.5' fill='#000'/><rect x='4.3' y='2.5' width='2.0' height='2.0' rx='0.5' fill='#000'/><rect x='7.4' y='2.5' width='2.0' height='2.0' rx='0.5' fill='#000'/><rect x='3.4' y='1.6' width='0.8' height='1.5' fill='#fff'/><rect x='6.5' y='1.6' width='0.8' height='1.5' fill='#fff'/></svg>
<div class='t lk' style='left:29.8px;top:405.60px'>ethernet1/17</div>
<div class='t' style='left:304.0px;top:405.60px'>none</div>
<div class='t' style='left:412.0px;top:405.60px'>none</div>
<div class='t' style='left:498.0px;top:405.60px'>Untagged</div>
<div class='t' style='left:555.0px;top:405.60px'>none</div>
<div class='t' style='left:627.0px;top:405.60px'>none</div>
<div class='t' style='left:699.0px;top:405.60px'>none</div>
<svg class='a' style='left:276.6px;top:405.80px' width='11.8' height='11' viewBox='0 0 11.8 11'><rect x='0.6' y='0.6' width='10.6' height='9.8' rx='0.5' fill='#cfcfcf' stroke='#3c3c3c' stroke-width='1.2'/><rect x='1.3' y='1.3' width='9.2' height='1' fill='#f6f6f6'/><path d='M2.5 8.6 V3.9 H3.8 Q4.2 2.9 5.9 2.9 Q7.6 2.9 8 3.9 H9.3 V8.6 Z' fill='#a2a2a2' stroke='#5a5a5a' stroke-width='0.8'/><rect x='3.7' y='5.3' width='4.6' height='3' fill='#e2e2e2'/><rect x='5.2' y='5.3' width='0.5' height='3' fill='#8c8c8c'/><rect x='6.5' y='5.3' width='0.5' height='3' fill='#8c8c8c'/><rect x='1.3' y='8.9' width='9.2' height='0.9' fill='#808080'/><circle cx='1.3' cy='9.6' r='0.8' fill='#111'/><circle cx='10.5' cy='9.6' r='0.8' fill='#111'/></svg>
<div class='a' style='left:12px;top:419.95px;width:935px;height:17.26px;background:#f0f1f3'></div>
<svg class='a' style='left:16.7px;top:426.15px' width='11.2' height='6' viewBox='0 0 11.2 6'><defs><linearGradient id='ig17' x1='0' y1='0' x2='0' y2='1'><stop offset='0' stop-color='#e2f0fa'/><stop offset='1' stop-color='#8fb4da'/></linearGradient></defs><rect x='0.4' y='0.4' width='10.4' height='5.2' rx='0.6' fill='url(#ig17)' stroke='#4f7aab' stroke-width='0.8'/><rect x='0.8' y='5.0' width='9.6' height='0.6' fill='#3a6292'/><rect x='1.3' y='2.5' width='2.0' height='2.0' rx='0.5' fill='#000'/><rect x='4.3' y='2.5' width='2.0' height='2.0' rx='0.5' fill='#000'/><rect x='7.4' y='2.5' width='2.0' height='2.0' rx='0.5' fill='#000'/><rect x='3.4' y='1.6' width='0.8' height='1.5' fill='#fff'/><rect x='6.5' y='1.6' width='0.8' height='1.5' fill='#fff'/></svg>
<div class='t lk' style='left:29.8px;top:422.85px'>ethernet1/18</div>
<div class='t' style='left:304.0px;top:422.85px'>none</div>
<div class='t' style='left:412.0px;top:422.85px'>none</div>
<div class='t' style='left:498.0px;top:422.85px'>Untagged</div>
<div class='t' style='left:555.0px;top:422.85px'>none</div>
<div class='t' style='left:627.0px;top:422.85px'>none</div>
<div class='t' style='left:699.0px;top:422.85px'>none</div>
<svg class='a' style='left:276.6px;top:423.05px' width='11.8' height='11' viewBox='0 0 11.8 11'><rect x='0.6' y='0.6' width='10.6' height='9.8' rx='0.5' fill='#cfcfcf' stroke='#3c3c3c' stroke-width='1.2'/><rect x='1.3' y='1.3' width='9.2' height='1' fill='#f6f6f6'/><path d='M2.5 8.6 V3.9 H3.8 Q4.2 2.9 5.9 2.9 Q7.6 2.9 8 3.9 H9.3 V8.6 Z' fill='#a2a2a2' stroke='#5a5a5a' stroke-width='0.8'/><rect x='3.7' y='5.3' width='4.6' height='3' fill='#e2e2e2'/><rect x='5.2' y='5.3' width='0.5' height='3' fill='#8c8c8c'/><rect x='6.5' y='5.3' width='0.5' height='3' fill='#8c8c8c'/><rect x='1.3' y='8.9' width='9.2' height='0.9' fill='#808080'/><circle cx='1.3' cy='9.6' r='0.8' fill='#111'/><circle cx='10.5' cy='9.6' r='0.8' fill='#111'/></svg>
<div class='a' style='left:12px;top:437.20px;width:935px;height:17.26px;background:#fdfdfd'></div>
<svg class='a' style='left:16.7px;top:443.40px' width='11.2' height='6' viewBox='0 0 11.2 6'><defs><linearGradient id='ig18' x1='0' y1='0' x2='0' y2='1'><stop offset='0' stop-color='#e2f0fa'/><stop offset='1' stop-color='#8fb4da'/></linearGradient></defs><rect x='0.4' y='0.4' width='10.4' height='5.2' rx='0.6' fill='url(#ig18)' stroke='#4f7aab' stroke-width='0.8'/><rect x='0.8' y='5.0' width='9.6' height='0.6' fill='#3a6292'/><rect x='1.3' y='2.5' width='2.0' height='2.0' rx='0.5' fill='#000'/><rect x='4.3' y='2.5' width='2.0' height='2.0' rx='0.5' fill='#000'/><rect x='7.4' y='2.5' width='2.0' height='2.0' rx='0.5' fill='#000'/><rect x='3.4' y='1.6' width='0.8' height='1.5' fill='#fff'/><rect x='6.5' y='1.6' width='0.8' height='1.5' fill='#fff'/></svg>
<div class='t lk' style='left:29.8px;top:440.10px'>ethernet1/19</div>
<div class='t' style='left:304.0px;top:440.10px'>none</div>
<div class='t' style='left:412.0px;top:440.10px'>none</div>
<div class='t' style='left:498.0px;top:440.10px'>Untagged</div>
<div class='t' style='left:555.0px;top:440.10px'>none</div>
<div class='t' style='left:627.0px;top:440.10px'>none</div>
<div class='t' style='left:699.0px;top:440.10px'>none</div>
<svg class='a' style='left:276.6px;top:440.30px' width='11.8' height='11' viewBox='0 0 11.8 11'><rect x='0.6' y='0.6' width='10.6' height='9.8' rx='0.5' fill='#cfcfcf' stroke='#3c3c3c' stroke-width='1.2'/><rect x='1.3' y='1.3' width='9.2' height='1' fill='#f6f6f6'/><path d='M2.5 8.6 V3.9 H3.8 Q4.2 2.9 5.9 2.9 Q7.6 2.9 8 3.9 H9.3 V8.6 Z' fill='#a2a2a2' stroke='#5a5a5a' stroke-width='0.8'/><rect x='3.7' y='5.3' width='4.6' height='3' fill='#e2e2e2'/><rect x='5.2' y='5.3' width='0.5' height='3' fill='#8c8c8c'/><rect x='6.5' y='5.3' width='0.5' height='3' fill='#8c8c8c'/><rect x='1.3' y='8.9' width='9.2' height='0.9' fill='#808080'/><circle cx='1.3' cy='9.6' r='0.8' fill='#111'/><circle cx='10.5' cy='9.6' r='0.8' fill='#111'/></svg>
<div class='a' style='left:12px;top:454.45px;width:935px;height:17.26px;background:#f0f1f3'></div>
<svg class='a' style='left:16.7px;top:460.65px' width='11.2' height='6' viewBox='0 0 11.2 6'><defs><linearGradient id='ig19' x1='0' y1='0' x2='0' y2='1'><stop offset='0' stop-color='#e2f0fa'/><stop offset='1' stop-color='#8fb4da'/></linearGradient></defs><rect x='0.4' y='0.4' width='10.4' height='5.2' rx='0.6' fill='url(#ig19)' stroke='#4f7aab' stroke-width='0.8'/><rect x='0.8' y='5.0' width='9.6' height='0.6' fill='#3a6292'/><rect x='1.3' y='2.5' width='2.0' height='2.0' rx='0.5' fill='#000'/><rect x='4.3' y='2.5' width='2.0' height='2.0' rx='0.5' fill='#000'/><rect x='7.4' y='2.5' width='2.0' height='2.0' rx='0.5' fill='#000'/><rect x='3.4' y='1.6' width='0.8' height='1.5' fill='#fff'/><rect x='6.5' y='1.6' width='0.8' height='1.5' fill='#fff'/></svg>
<div class='t lk' style='left:29.8px;top:457.35px'>ethernet1/20</div>
<div class='t' style='left:304.0px;top:457.35px'>none</div>
<div class='t' style='left:412.0px;top:457.35px'>none</div>
<div class='t' style='left:498.0px;top:457.35px'>Untagged</div>
<div class='t' style='left:555.0px;top:457.35px'>none</div>
<div class='t' style='left:627.0px;top:457.35px'>none</div>
<div class='t' style='left:699.0px;top:457.35px'>none</div>
<svg class='a' style='left:276.6px;top:457.55px' width='11.8' height='11' viewBox='0 0 11.8 11'><rect x='0.6' y='0.6' width='10.6' height='9.8' rx='0.5' fill='#cfcfcf' stroke='#3c3c3c' stroke-width='1.2'/><rect x='1.3' y='1.3' width='9.2' height='1' fill='#f6f6f6'/><path d='M2.5 8.6 V3.9 H3.8 Q4.2 2.9 5.9 2.9 Q7.6 2.9 8 3.9 H9.3 V8.6 Z' fill='#a2a2a2' stroke='#5a5a5a' stroke-width='0.8'/><rect x='3.7' y='5.3' width='4.6' height='3' fill='#e2e2e2'/><rect x='5.2' y='5.3' width='0.5' height='3' fill='#8c8c8c'/><rect x='6.5' y='5.3' width='0.5' height='3' fill='#8c8c8c'/><rect x='1.3' y='8.9' width='9.2' height='0.9' fill='#808080'/><circle cx='1.3' cy='9.6' r='0.8' fill='#111'/><circle cx='10.5' cy='9.6' r='0.8' fill='#111'/></svg>
<div class='a' style='left:12px;top:471.70px;width:935px;height:17.26px;background:#fdfdfd'></div>
<svg class='a' style='left:16.7px;top:477.90px' width='11.2' height='6' viewBox='0 0 11.2 6'><defs><linearGradient id='ig20' x1='0' y1='0' x2='0' y2='1'><stop offset='0' stop-color='#e2f0fa'/><stop offset='1' stop-color='#8fb4da'/></linearGradient></defs><rect x='0.4' y='0.4' width='10.4' height='5.2' rx='0.6' fill='url(#ig20)' stroke='#4f7aab' stroke-width='0.8'/><rect x='0.8' y='5.0' width='9.6' height='0.6' fill='#3a6292'/><rect x='1.3' y='2.5' width='2.0' height='2.0' rx='0.5' fill='#000'/><rect x='4.3' y='2.5' width='2.0' height='2.0' rx='0.5' fill='#000'/><rect x='7.4' y='2.5' width='2.0' height='2.0' rx='0.5' fill='#000'/><rect x='3.4' y='1.6' width='0.8' height='1.5' fill='#fff'/><rect x='6.5' y='1.6' width='0.8' height='1.5' fill='#fff'/></svg>
<div class='t lk' style='left:29.8px;top:474.60px'>ethernet1/21</div>
<div class='t' style='left:304.0px;top:474.60px'>none</div>
<div class='t' style='left:412.0px;top:474.60px'>none</div>
<div class='t' style='left:498.0px;top:474.60px'>Untagged</div>
<div class='t' style='left:555.0px;top:474.60px'>none</div>
<div class='t' style='left:627.0px;top:474.60px'>none</div>
<div class='t' style='left:699.0px;top:474.60px'>none</div>
<svg class='a' style='left:276.6px;top:474.80px' width='11.8' height='11' viewBox='0 0 11.8 11'><rect x='0.6' y='0.6' width='10.6' height='9.8' rx='0.5' fill='#cfcfcf' stroke='#3c3c3c' stroke-width='1.2'/><rect x='1.3' y='1.3' width='9.2' height='1' fill='#f6f6f6'/><path d='M2.5 8.6 V3.9 H3.8 Q4.2 2.9 5.9 2.9 Q7.6 2.9 8 3.9 H9.3 V8.6 Z' fill='#a2a2a2' stroke='#5a5a5a' stroke-width='0.8'/><rect x='3.7' y='5.3' width='4.6' height='3' fill='#e2e2e2'/><rect x='5.2' y='5.3' width='0.5' height='3' fill='#8c8c8c'/><rect x='6.5' y='5.3' width='0.5' height='3' fill='#8c8c8c'/><rect x='1.3' y='8.9' width='9.2' height='0.9' fill='#808080'/><circle cx='1.3' cy='9.6' r='0.8' fill='#111'/><circle cx='10.5' cy='9.6' r='0.8' fill='#111'/></svg>
<div class='a' style='left:12px;top:488.95px;width:935px;height:17.26px;background:#f0f1f3'></div>
<svg class='a' style='left:16.7px;top:495.15px' width='11.2' height='6' viewBox='0 0 11.2 6'><defs><linearGradient id='ig21' x1='0' y1='0' x2='0' y2='1'><stop offset='0' stop-color='#e2f0fa'/><stop offset='1' stop-color='#8fb4da'/></linearGradient></defs><rect x='0.4' y='0.4' width='10.4' height='5.2' rx='0.6' fill='url(#ig21)' stroke='#4f7aab' stroke-width='0.8'/><rect x='0.8' y='5.0' width='9.6' height='0.6' fill='#3a6292'/><rect x='1.3' y='2.5' width='2.0' height='2.0' rx='0.5' fill='#000'/><rect x='4.3' y='2.5' width='2.0' height='2.0' rx='0.5' fill='#000'/><rect x='7.4' y='2.5' width='2.0' height='2.0' rx='0.5' fill='#000'/><rect x='3.4' y='1.6' width='0.8' height='1.5' fill='#fff'/><rect x='6.5' y='1.6' width='0.8' height='1.5' fill='#fff'/></svg>
<div class='t lk' style='left:29.8px;top:491.85px'>ethernet1/22</div>
<div class='t' style='left:304.0px;top:491.85px'>none</div>
<div class='t' style='left:412.0px;top:491.85px'>none</div>
<div class='t' style='left:498.0px;top:491.85px'>Untagged</div>
<div class='t' style='left:555.0px;top:491.85px'>none</div>
<div class='t' style='left:627.0px;top:491.85px'>none</div>
<div class='t' style='left:699.0px;top:491.85px'>none</div>
<svg class='a' style='left:276.6px;top:492.05px' width='11.8' height='11' viewBox='0 0 11.8 11'><rect x='0.6' y='0.6' width='10.6' height='9.8' rx='0.5' fill='#cfcfcf' stroke='#3c3c3c' stroke-width='1.2'/><rect x='1.3' y='1.3' width='9.2' height='1' fill='#f6f6f6'/><path d='M2.5 8.6 V3.9 H3.8 Q4.2 2.9 5.9 2.9 Q7.6 2.9 8 3.9 H9.3 V8.6 Z' fill='#a2a2a2' stroke='#5a5a5a' stroke-width='0.8'/><rect x='3.7' y='5.3' width='4.6' height='3' fill='#e2e2e2'/><rect x='5.2' y='5.3' width='0.5' height='3' fill='#8c8c8c'/><rect x='6.5' y='5.3' width='0.5' height='3' fill='#8c8c8c'/><rect x='1.3' y='8.9' width='9.2' height='0.9' fill='#808080'/><circle cx='1.3' cy='9.6' r='0.8' fill='#111'/><circle cx='10.5' cy='9.6' r='0.8' fill='#111'/></svg>
<div class='a' style='left:12px;top:506.20px;width:935px;height:17.26px;background:#fdfdfd'></div>
<svg class='a' style='left:16.7px;top:512.40px' width='11.2' height='6' viewBox='0 0 11.2 6'><defs><linearGradient id='ig22' x1='0' y1='0' x2='0' y2='1'><stop offset='0' stop-color='#e2f0fa'/><stop offset='1' stop-color='#8fb4da'/></linearGradient></defs><rect x='0.4' y='0.4' width='10.4' height='5.2' rx='0.6' fill='url(#ig22)' stroke='#4f7aab' stroke-width='0.8'/><rect x='0.8' y='5.0' width='9.6' height='0.6' fill='#3a6292'/><rect x='1.3' y='2.5' width='2.0' height='2.0' rx='0.5' fill='#000'/><rect x='4.3' y='2.5' width='2.0' height='2.0' rx='0.5' fill='#000'/><rect x='7.4' y='2.5' width='2.0' height='2.0' rx='0.5' fill='#000'/><rect x='3.4' y='1.6' width='0.8' height='1.5' fill='#fff'/><rect x='6.5' y='1.6' width='0.8' height='1.5' fill='#fff'/></svg>
<div class='t lk' style='left:29.8px;top:509.10px'>ethernet1/23</div>
<div class='t' style='left:304.0px;top:509.10px'>none</div>
<div class='t' style='left:412.0px;top:509.10px'>none</div>
<div class='t' style='left:498.0px;top:509.10px'>Untagged</div>
<div class='t' style='left:555.0px;top:509.10px'>none</div>
<div class='t' style='left:627.0px;top:509.10px'>none</div>
<div class='t' style='left:699.0px;top:509.10px'>none</div>
<svg class='a' style='left:276.6px;top:509.30px' width='11.8' height='11' viewBox='0 0 11.8 11'><rect x='0.6' y='0.6' width='10.6' height='9.8' rx='0.5' fill='#cfcfcf' stroke='#3c3c3c' stroke-width='1.2'/><rect x='1.3' y='1.3' width='9.2' height='1' fill='#f6f6f6'/><path d='M2.5 8.6 V3.9 H3.8 Q4.2 2.9 5.9 2.9 Q7.6 2.9 8 3.9 H9.3 V8.6 Z' fill='#a2a2a2' stroke='#5a5a5a' stroke-width='0.8'/><rect x='3.7' y='5.3' width='4.6' height='3' fill='#e2e2e2'/><rect x='5.2' y='5.3' width='0.5' height='3' fill='#8c8c8c'/><rect x='6.5' y='5.3' width='0.5' height='3' fill='#8c8c8c'/><rect x='1.3' y='8.9' width='9.2' height='0.9' fill='#808080'/><circle cx='1.3' cy='9.6' r='0.8' fill='#111'/><circle cx='10.5' cy='9.6' r='0.8' fill='#111'/></svg>
<div class='a' style='left:12px;top:523.45px;width:935px;height:17.26px;background:#f0f1f3'></div>
<svg class='a' style='left:16.7px;top:529.65px' width='11.2' height='6' viewBox='0 0 11.2 6'><defs><linearGradient id='ig23' x1='0' y1='0' x2='0' y2='1'><stop offset='0' stop-color='#e2f0fa'/><stop offset='1' stop-color='#8fb4da'/></linearGradient></defs><rect x='0.4' y='0.4' width='10.4' height='5.2' rx='0.6' fill='url(#ig23)' stroke='#4f7aab' stroke-width='0.8'/><rect x='0.8' y='5.0' width='9.6' height='0.6' fill='#3a6292'/><rect x='1.3' y='2.5' width='2.0' height='2.0' rx='0.5' fill='#000'/><rect x='4.3' y='2.5' width='2.0' height='2.0' rx='0.5' fill='#000'/><rect x='7.4' y='2.5' width='2.0' height='2.0' rx='0.5' fill='#000'/><rect x='3.4' y='1.6' width='0.8' height='1.5' fill='#fff'/><rect x='6.5' y='1.6' width='0.8' height='1.5' fill='#fff'/></svg>
<div class='t lk' style='left:29.8px;top:526.35px'>ethernet1/24</div>
<div class='t' style='left:304.0px;top:526.35px'>none</div>
<div class='t' style='left:412.0px;top:526.35px'>none</div>
<div class='t' style='left:498.0px;top:526.35px'>Untagged</div>
<div class='t' style='left:555.0px;top:526.35px'>none</div>
<div class='t' style='left:627.0px;top:526.35px'>none</div>
<div class='t' style='left:699.0px;top:526.35px'>none</div>
<svg class='a' style='left:276.6px;top:526.55px' width='11.8' height='11' viewBox='0 0 11.8 11'><rect x='0.6' y='0.6' width='10.6' height='9.8' rx='0.5' fill='#cfcfcf' stroke='#3c3c3c' stroke-width='1.2'/><rect x='1.3' y='1.3' width='9.2' height='1' fill='#f6f6f6'/><path d='M2.5 8.6 V3.9 H3.8 Q4.2 2.9 5.9 2.9 Q7.6 2.9 8 3.9 H9.3 V8.6 Z' fill='#a2a2a2' stroke='#5a5a5a' stroke-width='0.8'/><rect x='3.7' y='5.3' width='4.6' height='3' fill='#e2e2e2'/><rect x='5.2' y='5.3' width='0.5' height='3' fill='#8c8c8c'/><rect x='6.5' y='5.3' width='0.5' height='3' fill='#8c8c8c'/><rect x='1.3' y='8.9' width='9.2' height='0.9' fill='#808080'/><circle cx='1.3' cy='9.6' r='0.8' fill='#111'/><circle cx='10.5' cy='9.6' r='0.8' fill='#111'/></svg>
<div class='a' style='left:12px;top:540.70px;width:935px;height:17.26px;background:#bfcccf'></div>
<svg class='a' style='left:16.7px;top:546.90px' width='11.2' height='6' viewBox='0 0 11.2 6'><defs><linearGradient id='ig24' x1='0' y1='0' x2='0' y2='1'><stop offset='0' stop-color='#e2f0fa'/><stop offset='1' stop-color='#8fb4da'/></linearGradient></defs><rect x='0.4' y='0.4' width='10.4' height='5.2' rx='0.6' fill='url(#ig24)' stroke='#4f7aab' stroke-width='0.8'/><rect x='0.8' y='5.0' width='9.6' height='0.6' fill='#3a6292'/><rect x='1.3' y='2.5' width='2.0' height='2.0' rx='0.5' fill='#000'/><rect x='4.3' y='2.5' width='2.0' height='2.0' rx='0.5' fill='#000'/><rect x='7.4' y='2.5' width='2.0' height='2.0' rx='0.5' fill='#000'/><rect x='3.4' y='1.6' width='0.8' height='1.5' fill='#fff'/><rect x='6.5' y='1.6' width='0.8' height='1.5' fill='#fff'/></svg>
<div class='t lk sl' style='left:29.8px;top:543.60px'>ae1</div>
<div class='t sl' style='left:124.0px;top:543.60px'>Layer3</div>
<div class='t sl' style='left:196.0px;top:543.60px'>allow-ping</div>
<div class='t sl' style='left:304.0px;top:543.60px'>1.1.1.2/24</div>
<div class='t sl' style='left:412.0px;top:543.60px'>default</div>
<div class='t sl' style='left:498.0px;top:543.60px'>Untagged</div>
<div class='t sl' style='left:555.0px;top:543.60px'>none</div>
<div class='t sl' style='left:627.0px;top:543.60px'>vsys1</div>
<div class='t sl' style='left:699.0px;top:543.60px'>L3-Trust</div>
<svg class='a' style='left:276.6px;top:543.80px' width='11.8' height='10' viewBox='0 0 11.8 10'><rect x='0.5' y='0.5' width='10.8' height='9' fill='#eab0a0' stroke='#c07a68'/><rect x='1' y='1.0' width='9.8' height='1.1' fill='#f9e4dc'/><path d='M2.1 8.2 V3.3 H3.5 Q3.9 2.1 5.9 2.1 Q7.9 2.1 8.3 3.3 H9.7 V8.2 Z' fill='#e8000f'/><rect x='3.4' y='5.0' width='5.0' height='3.2' fill='#f49aa0'/><rect x='4.9' y='5.0' width='0.55' height='3.2' fill='#e04a56'/><rect x='6.4' y='5.0' width='0.55' height='3.2' fill='#e04a56'/><rect x='1' y='8.2' width='9.8' height='1' fill='#cf8f7f'/><rect x='0.4' y='8.4' width='1.1' height='1.1' fill='#8f4a3c'/><rect x='10.3' y='8.4' width='1.1' height='1.1' fill='#8f4a3c'/></svg>
<svg class='a' style='left:810px;top:541px' width='14' height='14' viewBox='0 0 14 14'><path d='M7.4 6.2 Q5 7 4.1 10.6' fill='none' stroke='#2c6690' stroke-width='1.3'/><path d='M7.6 6.2 Q10.2 7.2 11.2 10.6' fill='none' stroke='#b3cf46' stroke-width='1.3'/><line x1='7.4' y1='3.6' x2='7.4' y2='6.6' stroke='#2c6690' stroke-width='1.3'/><path d='M5.2 4.6 L7.4 2.3 L9.6 4.6 Z' fill='#2c6690'/><circle cx='4.1' cy='11.6' r='1.75' fill='#000'/><circle cx='11.3' cy='11.6' r='1.75' fill='#000'/></svg>
<div class='a' style='left:12px;top:557.95px;width:935px;height:17.26px;background:#f0f1f3'></div>
<svg class='a' style='left:16.7px;top:564.15px' width='11.2' height='6' viewBox='0 0 11.2 6'><defs><linearGradient id='ig25' x1='0' y1='0' x2='0' y2='1'><stop offset='0' stop-color='#e2f0fa'/><stop offset='1' stop-color='#8fb4da'/></linearGradient></defs><rect x='0.4' y='0.4' width='10.4' height='5.2' rx='0.6' fill='url(#ig25)' stroke='#4f7aab' stroke-width='0.8'/><rect x='0.8' y='5.0' width='9.6' height='0.6' fill='#3a6292'/><rect x='1.3' y='2.5' width='2.0' height='2.0' rx='0.5' fill='#000'/><rect x='4.3' y='2.5' width='2.0' height='2.0' rx='0.5' fill='#000'/><rect x='7.4' y='2.5' width='2.0' height='2.0' rx='0.5' fill='#000'/><rect x='3.4' y='1.6' width='0.8' height='1.5' fill='#fff'/><rect x='6.5' y='1.6' width='0.8' height='1.5' fill='#fff'/></svg>
<div class='t lk' style='left:29.8px;top:560.85px'>ae2</div>
<div class='t' style='left:124.0px;top:560.85px'>Layer3</div>
<div class='t' style='left:304.0px;top:560.85px'>none</div>
<div class='t' style='left:412.0px;top:560.85px'>default</div>
<div class='t' style='left:498.0px;top:560.85px'>Untagged</div>
<div class='t' style='left:555.0px;top:560.85px'>none</div>
<div class='t' style='left:627.0px;top:560.85px'>vsys1</div>
<div class='t' style='left:699.0px;top:560.85px'>L3-Trust</div>
<svg class='a' style='left:276.6px;top:561.05px' width='11.8' height='10' viewBox='0 0 11.8 10'><rect x='0.5' y='0.5' width='10.8' height='9' fill='#eab0a0' stroke='#c07a68'/><rect x='1' y='1.0' width='9.8' height='1.1' fill='#f9e4dc'/><path d='M2.1 8.2 V3.3 H3.5 Q3.9 2.1 5.9 2.1 Q7.9 2.1 8.3 3.3 H9.7 V8.2 Z' fill='#e8000f'/><rect x='3.4' y='5.0' width='5.0' height='3.2' fill='#f49aa0'/><rect x='4.9' y='5.0' width='0.55' height='3.2' fill='#e04a56'/><rect x='6.4' y='5.0' width='0.55' height='3.2' fill='#e04a56'/><rect x='1' y='8.2' width='9.8' height='1' fill='#cf8f7f'/><rect x='0.4' y='8.4' width='1.1' height='1.1' fill='#8f4a3c'/><rect x='10.3' y='8.4' width='1.1' height='1.1' fill='#8f4a3c'/></svg>
<div class='a' style='left:12px;top:575.20px;width:935px;height:12px;background:#fdfdfd'></div>
<div class='vl' style='left:119.0px;top:126.7px;height:454.30px;background:#dedfe1'></div>
<div class='vl' style='left:191.0px;top:126.7px;height:454.30px;background:#dedfe1'></div>
<div class='vl' style='left:263.0px;top:126.7px;height:454.30px;background:#dedfe1'></div>
<div class='vl' style='left:299.0px;top:126.7px;height:454.30px;background:#dedfe1'></div>
<div class='vl' style='left:407.0px;top:126.7px;height:454.30px;background:#dedfe1'></div>
<div class='vl' style='left:493.0px;top:126.7px;height:454.30px;background:#dedfe1'></div>
<div class='vl' style='left:550.0px;top:126.7px;height:454.30px;background:#dedfe1'></div>
<div class='vl' style='left:622.0px;top:126.7px;height:454.30px;background:#dedfe1'></div>
<div class='vl' style='left:694.0px;top:126.7px;height:454.30px;background:#dedfe1'></div>
<div class='vl' style='left:780.0px;top:126.7px;height:454.30px;background:#dedfe1'></div>
<div class='vl' style='left:852.0px;top:126.7px;height:454.30px;background:#dedfe1'></div>
<div class='vl' style='left:938.0px;top:126.7px;height:454.30px;background:#dedfe1'></div>
<div class='vl' style='left:11px;top:126.7px;height:454.30px;background:#eeeeee'></div>
</div></div></body></html>
